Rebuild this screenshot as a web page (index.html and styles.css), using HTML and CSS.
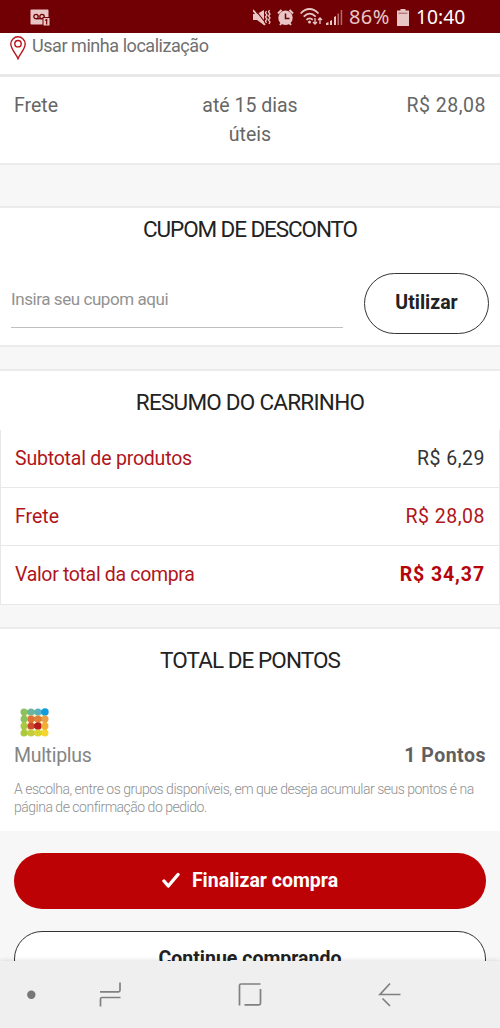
FILE: index.html
```html
<!DOCTYPE html>
<html lang="pt-BR">
<head>
<meta charset="utf-8">
<meta name="viewport" content="width=device-width">
<title>Carrinho</title>
<link rel="stylesheet" href="styles.css">
</head>
<body>
<div class="screen">
  <header class="status">
    <svg class="voicemail" width="20" height="17" viewBox="0 0 20 17"><rect x="0.5" y="0.5" width="18" height="15" rx="1" fill="#e9c6c6"/><g fill="none" stroke="#700003" stroke-width="1.3"><circle cx="6" cy="7.500" r="2.200"/><circle cx="12" cy="7.500" r="2.200"/><path d="M6 9.700h6"/></g><rect x="13" y="8.500" width="7" height="8.500" fill="#e9c6c6" stroke="#700003"/><path d="M15.200 11.500l1.500-1v5" fill="none" stroke="#700003" stroke-width="1.2"/></svg>
    <div class="status-right">
      <svg class="mute" width="18" height="17" viewBox="0 0 18 17"><path d="M0 5h4l7-4v15l-7-5H0z" fill="#e9c6c6"/><path d="M1.500 0l12 15" stroke="#700003" stroke-width="1.200"/><path d="M0 1l12 15" stroke="#e9c6c6" stroke-width="1.800"/><path d="M13.500 2L12.500 4l1.500 2-1.500 2 1.500 2-1.500 2 1 2M16.500 1L15.500 3l1.500 2-1.500 2 1.500 2-1.500 2 1.500 2-1 2" fill="none" stroke="#e9c6c6" stroke-width="1.3"/></svg>
      <svg class="alarm" width="17" height="17" viewBox="0 0 17 17"><circle cx="8.5" cy="8.8" r="7.2" fill="#e9c6c6"/><path d="M1 4.5L4.5 1M16 4.5L12.500 1M3 16l2-2.500M14 16l-2-2.500" stroke="#e9c6c6" stroke-width="2"/><path d="M8.500 4.500v5h4" fill="none" stroke="#700003" stroke-width="1.5"/></svg>
      <svg class="wifi" width="23" height="18" viewBox="0 0 23 18"><g fill="none" stroke="#e9c6c6" stroke-width="1.8"><path d="M.7 5.500C6-.5 13-.5 18.500 5.500M3.700 8.700c4-4 8-4 12 0M6.500 11.800c2-2 4.300-2 6.300 0"/></g><circle cx="9.500" cy="14" r="1.500" fill="#e9c6c6"/><path d="M15 10v6M13 14l2 2 2-2M20 16v-6M18 12l2-2 2 2" fill="none" stroke="#e9c6c6" stroke-width="1.300"/></svg>
      <svg class="signal" width="17" height="17" viewBox="0 0 17 17"><path d="M0 16v-2l2.500-1v3zM4 16v-4l2-1v5z" fill="#e9c6c6"/><path d="M8 8l2-1v9H8z" fill="#e9c6c6"/><path d="M11.500 4.500h1.500v11.500h-1.500zM14.700 1h1.500v15h-1.500z" fill="#b66c6d"/></svg>
      <span class="percent">86%</span>
      <svg class="battery" width="12" height="17" viewBox="0 0 12 17"><path d="M3.500 0h5v1.500H12V17H0V1.500h3.500z" fill="#e9c6c6"/><path d="M1.500 4.200h9" stroke="#a35a5b"/></svg>
      <span class="clock">10:40</span>
    </div>
  </header>

  <div class="location">
    <svg width="16" height="24" viewBox="0 0 16 24"><path d="M8 22.700C6.500 18.500.8 13 .8 8a7.200 7.200 0 0 1 14.400 0c0 5-5.700 10.500-7.200 14.700z" fill="none" stroke="#b9151b" stroke-width="1.400"/><circle cx="8" cy="7.700" r="3.200" fill="none" stroke="#b9151b" stroke-width="1.400"/></svg>
    <span class="location-text">Usar minha localização</span>
  </div>

  <div class="shipping">
    <span>Frete</span>
    <span class="term">até 15 dias<br>úteis</span>
    <span class="right price">R$ 28,08</span>
  </div>

  <section class="card coupon">
    <h2 class="t-coupon">CUPOM DE DESCONTO</h2>
    <div class="coupon-row">
      <div class="field">Insira seu cupom aqui</div>
      <div class="use">Utilizar</div>
    </div>
  </section>

  <section class="card summary">
    <h2 class="t-summary">RESUMO DO CARRINHO</h2>
    <div class="rows">
      <div class="row"><span class="l-sub">Subtotal de produtos</span><span class="price dark">R$ 6,29</span></div>
      <div class="row"><span>Frete</span><span class="price">R$ 28,08</span></div>
      <div class="row"><span class="l-total">Valor total da compra</span><span class="total">R$ 34,37</span></div>
    </div>
  </section>

  <section class="card points">
    <h2 class="t-points">TOTAL DE PONTOS</h2>
    <svg class="multiplus" width="30" height="30" viewBox="0 0 30 30">
      <path d="M4 4h21v21H4z" fill="#f5edc0"/>
      <g stroke-width="4"><path d="M4 4h14" stroke="#7bbd9c"/><path d="M18 4h7" stroke="#45a9cf"/><path d="M4 4v21" stroke="#a8c94e"/><path d="M4 25h21" stroke="#d0d34b"/><path d="M25 11v14" stroke="#f0b83b"/><path d="M11 11h14M11 11v7" stroke="#df8544"/><path d="M11 18h7" stroke="#b72c22"/></g>
      <g fill="#8bc25d"><circle cx="4" cy="4" r="3.500"/><circle cx="4" cy="11" r="3.500"/></g>
      <circle cx="11" cy="4" r="3.500" fill="#69b69a"/><circle cx="18" cy="4" r="3.500" fill="#58b1c0"/><circle cx="25" cy="4" r="3.700" fill="#149bdc"/>
      <circle cx="11" cy="11" r="3.600" fill="#df7135"/><circle cx="18" cy="11" r="3.500" fill="#df8038"/><circle cx="25" cy="11" r="3.500" fill="#eaa044"/>
      <circle cx="4" cy="18" r="3.500" fill="#a8c843"/><circle cx="11" cy="18" r="3.600" fill="#cf4b2d"/><circle cx="18" cy="18" r="3.700" fill="#b51b1e"/><circle cx="25" cy="18" r="3.500" fill="#f0ae35"/>
      <circle cx="4" cy="25" r="3.500" fill="#abc93e"/><circle cx="11" cy="25" r="3.500" fill="#c2cf3c"/><circle cx="18" cy="25" r="3.500" fill="#d9d52f"/><circle cx="25" cy="25" r="3.500" fill="#f6d52e"/>
    </svg>
    <div class="points-row"><span class="program">Multiplus</span><span class="amount">1 Pontos</span></div>
    <p class="note">A escolha, entre os grupos disponíveis, em que deseja acumular seus pontos é na<br>página de confirmação do pedido.</p>
  </section>

  <div class="actions">
    <div class="finish"><svg width="18" height="17" viewBox="0 0 18 17"><path d="M2 9l4.300 5L16 2.500" fill="none" stroke="#fff" stroke-width="3.400" stroke-linecap="round" stroke-linejoin="round"/></svg><span>Finalizar compra</span></div>
    <div class="continue"><span>Continue comprando</span></div>
  </div>

  <nav class="nav">
    <svg width="500" height="67" viewBox="0 0 500 67"><circle cx="31.300" cy="33.700" r="4.200" fill="#777"/><g fill="none" stroke="#808080" stroke-width="1.700"><path d="M100 30.800h18.500q1.500 0 1.500-1.500V21.500M120.500 36.500H102q-1.500 0-1.500 1.500v7.500"/><path d="M239.500 44.500V24.500q0-1.500 1.500-1.500h19.500M244.500 43.800H259q1.500 0 1.500-1.500V28"/><path d="M400.500 33.500H380L390 22.500M382.500 37.500l7.500 7.500"/></g></svg>
  </nav>
</div>
</body>
</html>
```
FILE: styles.css
```css
* { box-sizing: border-box; }
body { margin: 0; background: #f7f7f7; font-family: Roboto, "Open Sans", sans-serif; }
.screen { width: 500px; height: 1028px; overflow: hidden; display: flex; flex-direction: column; background: #f7f7f7; }
.screen > * { flex: none; }
svg { display: block; flex: none; }

.status { height: 33px; background: #700003; display: flex; align-items: center; justify-content: space-between; padding: 1px 34px 0 30px; }
.status-right { display: flex; align-items: center; color: #fff; font-family: "Noto Sans", sans-serif; font-size: 19.3px; line-height: 24px; }
.alarm { margin-left: 6px; }
.wifi { margin-left: 6px; }
.signal { margin-left: 3px; }
.percent { margin-left: 6px; width: 42px; color: #e9c6c6; font-size: 20px; letter-spacing: .4px; }
.battery { margin-left: 6px; }
.clock { margin-left: 7px; width: 50px; }

.location { height: 44px; background: #fff; border-bottom: 3px solid #e8e8e8; display: flex; align-items: flex-start; padding: 3px 10px 0; gap: 6px; color: #707070; }
.location-text { font-size: 18px; line-height: 20px; letter-spacing: -.45px; }

.shipping { height: 88px; background: #fff; border-bottom: 2px solid #ebebeb; padding: 14px 14px 0; display: grid; grid-template-columns: 1fr 130px 1fr; font-size: 19.5px; line-height: 29px; color: #666; }
.term { text-align: center; }
.right { text-align: right; }
.price { letter-spacing: .5px; }

.card { background: #fff; }
h2 { margin: 0; text-align: center; font-size: 22.5px; font-weight: 400; line-height: 30px; color: #222; }
.t-coupon { letter-spacing: -1.1px; }
.t-summary { letter-spacing: -.75px; }
.t-points { letter-spacing: -.93px; }
.coupon { margin-top: 41px; height: 141px; border-top: 2px solid #ebebeb; border-bottom: 2px solid #ebebeb; padding-top: 6px; }
.coupon-row { display: flex; justify-content: space-between; padding: 29px 11px 0; }
.field { width: 332px; height: 55px; border-bottom: 1.5px solid #bfbfbf; color: #929292; font-size: 17px; line-height: 20px; padding-top: 16px; letter-spacing: -.43px; }
.use { width: 125px; height: 61px; border: 1.5px solid #333; border-radius: 31px; text-align: center; font-size: 19.5px; line-height: 58px; font-weight: 700; color: #222; }

.summary { margin-top: 22px; height: 235px; border-top: 2px solid #ebebeb; padding-top: 16px; }
.rows { margin-top: 13px; border: solid #e8e8e8; border-width: 0 1px; }
.row { height: 58px; border-bottom: 1.5px solid #e8e8e8; display: flex; align-items: center; justify-content: space-between; padding: 0 14px 1px; font-size: 19.5px; color: #b0151b; }
.row:last-child { height: 59px; }
.l-sub { letter-spacing: -.2px; }
.l-total { letter-spacing: -.33px; }
.dark { color: #333; }
.total { color: #b5050a; font-weight: 700; letter-spacing: .9px; }

.points { margin-top: 23px; height: 204px; border-top: 2px solid #ebebeb; padding: 16px 14px 0; }
.multiplus { margin: 33px 0 0 6px; }
.points-row { display: flex; justify-content: space-between; margin-top: 5px; line-height: 26px; font-size: 19.5px; color: #858585; }
.program { letter-spacing: -.3px; }
.amount { font-weight: 700; color: #606060; letter-spacing: .5px; }
.note { margin: 11px 0 0; font-size: 14px; line-height: 18px; font-weight: 300; color: #909090; white-space: nowrap; letter-spacing: -.49px; }

.actions { height: 130px; padding: 22px 14px 0; overflow: hidden; }
.finish { height: 56px; border-radius: 28px; background: #bd0205; color: #fff; display: flex; align-items: center; justify-content: center; gap: 12px; padding-bottom: 2px; font-weight: 700; font-size: 19.5px; }
.continue { margin-top: 22px; height: 57px; border: 1.5px solid #333; border-radius: 28px; background: #fff; text-align: center; padding-top: 12px; line-height: 29px; font-size: 19.5px; font-weight: 700; color: #222; }
.nav { height: 67px; background: #efefef; box-shadow: 0 0 5px rgba(0,0,0,.16); position: relative; }
```
